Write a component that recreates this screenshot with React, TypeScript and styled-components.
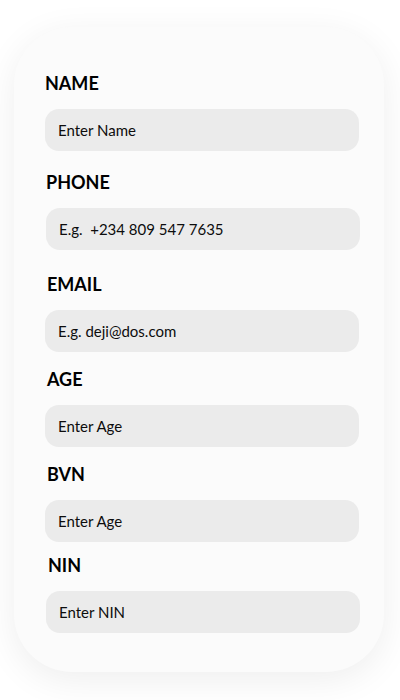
import React from "react";
import styled, { createGlobalStyle } from "styled-components";

interface FieldDef {
  label: string;
  placeholder: string;
  space: number;
  indent: number;
  shift: number;
}

const fields: FieldDef[] = [
  { label: "NAME", placeholder: "Enter Name", space: 0, indent: 0, shift: 0 },
  { label: "PHONE", placeholder: "E.g.  +234 809 547 7635", space: 20, indent: 1, shift: 1 },
  { label: "EMAIL", placeholder: "E.g. deji@dos.com", space: 23, indent: 2, shift: 0 },
  { label: "AGE", placeholder: "Enter Age", space: 16, indent: 2, shift: 0 },
  { label: "BVN", placeholder: "Enter Age", space: 16, indent: 2, shift: 0 },
  { label: "NIN", placeholder: "Enter NIN", space: 12, indent: 3, shift: 1 },
];

const GlobalStyle = createGlobalStyle`
  body {
    margin: 0;
    background: #ffffff;
    font-family: "Lato", "Open Sans", sans-serif;
  }
`;

const Page = styled.div`
  width: 400px;
  height: 700px;
  box-sizing: border-box;
  padding: 27px 16px 0 14px;
`;

const Card = styled.form`
  width: 370px;
  height: 645px;
  box-sizing: border-box;
  padding: 45px 25px 0 31px;
  background: #fbfbfb;
  border-radius: 58px;
  box-shadow: 0 8px 36px rgba(0, 0, 0, 0.07);
  display: flex;
  flex-direction: column;
`;

const Field = styled.div<{ $space: number }>`
  display: flex;
  flex-direction: column;
  margin-top: ${(p) => p.$space}px;
`;

const Label = styled.label<{ $indent: number }>`
  display: block;
  margin: 0 0 15px ${(p) => p.$indent}px;
  font-family: "Lato", "Open Sans", sans-serif;
  font-weight: 700;
  font-size: 18px;
  line-height: 22px;
  letter-spacing: 0;
  color: #000000;
`;

const Input = styled.input<{ $shift: number }>`
  width: 314px;
  height: 42px;
  box-sizing: border-box;
  margin: 0 0 0 ${(p) => p.$shift}px;
  padding: 0 13px;
  border: none;
  outline: none;
  border-radius: 14px;
  background: #ebebeb;
  font-family: "Lato", "Open Sans", sans-serif;
  font-size: 15px;
  color: #111111;

  &::placeholder {
    color: #0d0d0d;
    opacity: 1;
  }
`;

export default function App() {
  return (
    <Page>
      <GlobalStyle />
      <Card onSubmit={(e) => e.preventDefault()}>
        {fields.map((f) => (
          <Field key={f.label} $space={f.space}>
            <Label $indent={f.indent}>{f.label}</Label>
            <Input $shift={f.shift} placeholder={f.placeholder} />
          </Field>
        ))}
      </Card>
    </Page>
  );
}
